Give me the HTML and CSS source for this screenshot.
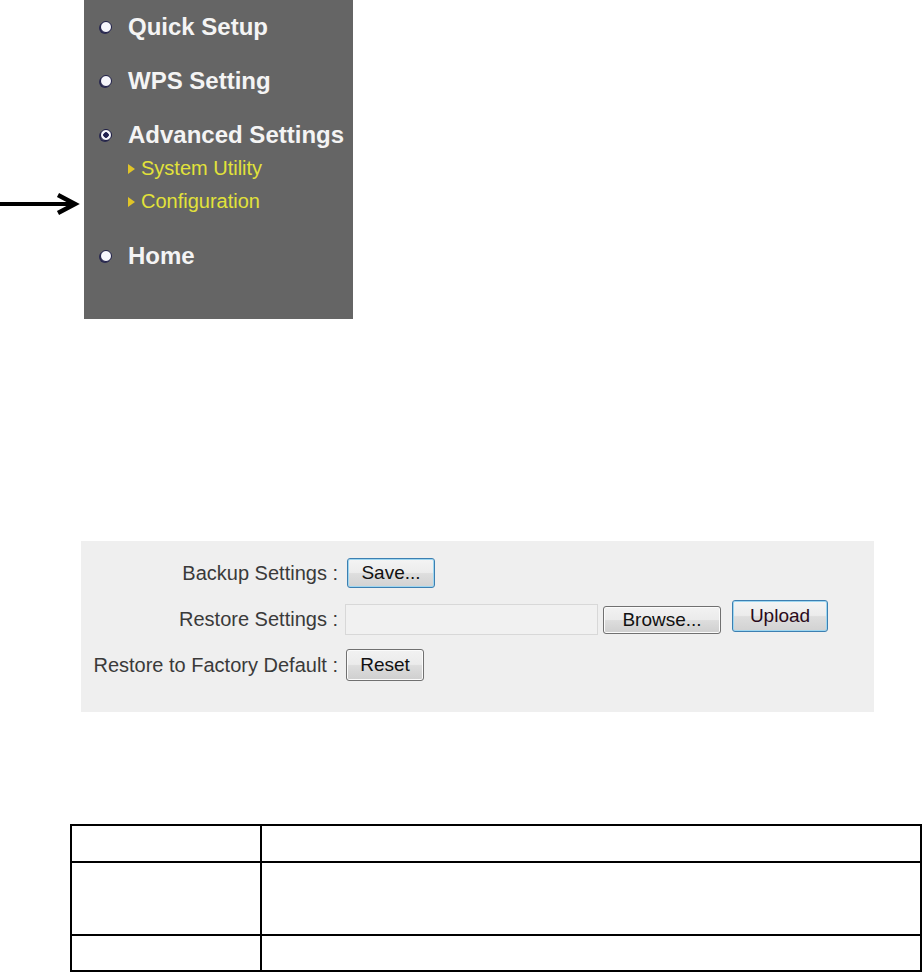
FILE: index.html
```html
<!DOCTYPE html>
<html>
<head>
<meta charset="utf-8">
<link rel="stylesheet" href="styles.css">
</head>
<body>
<div class="arrow">
  <svg width="80" height="24" viewBox="0 0 80 24">
    <line x1="0" y1="12" x2="72" y2="12" stroke="#000" stroke-width="4"/>
    <polyline points="58,3 75,12 58,21" fill="none" stroke="#000" stroke-width="4.5" stroke-linejoin="miter"/>
  </svg>
</div>

<div class="menu">
  <div class="item"><span class="bullet"></span>Quick Setup</div>
  <div class="item"><span class="bullet"></span>WPS Setting</div>
  <div class="item adv"><span class="bullet sel"></span>Advanced Settings</div>
  <div class="sub"><span class="tri"></span>System Utility</div>
  <div class="sub"><span class="tri"></span>Configuration</div>
  <div class="item home"><span class="bullet"></span>Home</div>
</div>

<div class="panel">
  <div class="lbl">Backup Settings :</div>
  <div class="ctl"><button class="btn focus save">Save...</button></div>
  <div class="lbl">Restore Settings :</div>
  <div class="ctl"><span class="file"></span><button class="btn browse">Browse...</button><button class="btn focus upload">Upload</button></div>
  <div class="lbl">Restore to Factory Default :</div>
  <div class="ctl"><button class="btn reset">Reset</button></div>
</div>

<table class="tbl">
  <tr class="r1"><td class="c1"></td><td></td></tr>
  <tr class="r2"><td class="c1"></td><td></td></tr>
  <tr class="r3"><td class="c1"></td><td></td></tr>
</table>
</body>
</html>
```

FILE: styles.css
```css
html, body {
  margin: 0;
  padding: 0;
  background: #fff;
  font-family: "Liberation Sans", Arial, sans-serif;
}

.arrow {
  position: absolute;
  left: 0;
  top: 192px;
  line-height: 0;
}

.menu {
  margin-left: 84px;
  width: 269px;
  height: 319px;
  background: #656565;
  padding-top: 10px;
  box-sizing: border-box;
}

.item {
  display: flex;
  align-items: center;
  height: 34px;
  color: #f4f4f4;
  font-weight: bold;
  font-size: 24px;
  margin-bottom: 20px;
  padding-left: 16px;
}

.item.adv { margin-bottom: 0; }
.item.home { margin-top: 21px; }

.bullet {
  width: 10px;
  height: 10px;
  border-radius: 50%;
  background: #f6f6fc;
  border: 1px solid #1c1c44;
  box-shadow: -1px 1px 0 #2a2a50;
  margin-right: 16px;
  box-sizing: content-box;
  flex: none;
}

.bullet.sel {
  background: radial-gradient(circle, #202050 0 2.5px, #f6f6fc 3px);
}

.sub {
  display: flex;
  align-items: center;
  height: 33px;
  padding-left: 44px;
  color: #e2e23a;
  font-size: 20px;
}

.tri {
  width: 0;
  height: 0;
  border-top: 5px solid transparent;
  border-bottom: 5px solid transparent;
  border-left: 7px solid #e0c428;
  margin-right: 6px;
  flex: none;
}

.panel {
  margin-top: 222px;
  margin-left: 81px;
  width: 793px;
  height: 171px;
  background: #efefef;
  box-sizing: border-box;
  padding-top: 14px;
  display: grid;
  grid-template-columns: 257px 1fr;
  grid-auto-rows: 36px;
  row-gap: 10px;
  column-gap: 8px;
}

.lbl {
  display: flex;
  align-items: center;
  justify-content: flex-end;
  color: #3a3a3a;
  font-size: 20px;
  white-space: nowrap;
}

.ctl {
  display: flex;
  align-items: center;
}

.btn {
  font-family: "Liberation Sans", Arial, sans-serif;
  font-size: 19px;
  color: #111;
  border: 1px solid #707070;
  border-radius: 3px;
  background: linear-gradient(#f2f2f2 0%, #ebebeb 48%, #dddddd 52%, #cfcfcf 100%);
  padding: 0;
  box-shadow: inset 0 0 0 1px #fbfbfb;
}

.btn.focus {
  border-color: #3c7fb1;
  box-shadow: inset 0 0 0 1px #9ed6f0;
  background: linear-gradient(#f4f4f4 0%, #ececec 48%, #dedede 52%, #d2d2d2 100%);
}

.save {
  width: 88px;
  height: 30px;
  margin-left: 1px;
}

.file {
  width: 253px;
  height: 31px;
  border: 1px solid #d8d8d8;
  background: #f1f1f1;
  box-sizing: border-box;
  margin-left: -1px;
}

.browse {
  width: 118px;
  height: 28px;
  margin-left: 5px;
  margin-top: 1px;
}

.upload {
  width: 96px;
  height: 32px;
  margin-left: 11px;
  margin-top: -6px;
  color: #2a0a1a;
}

.reset {
  width: 78px;
  height: 32px;
}

.tbl {
  margin-top: 112px;
  margin-left: 70px;
  width: 852px;
  border-collapse: collapse;
}

.tbl td {
  border: 2px solid #000;
  padding: 0;
}

.tbl .c1 { width: 188px; }
.r1 td { height: 35px; }
.r2 td { height: 71px; }
.r3 td { height: 34px; }
```
